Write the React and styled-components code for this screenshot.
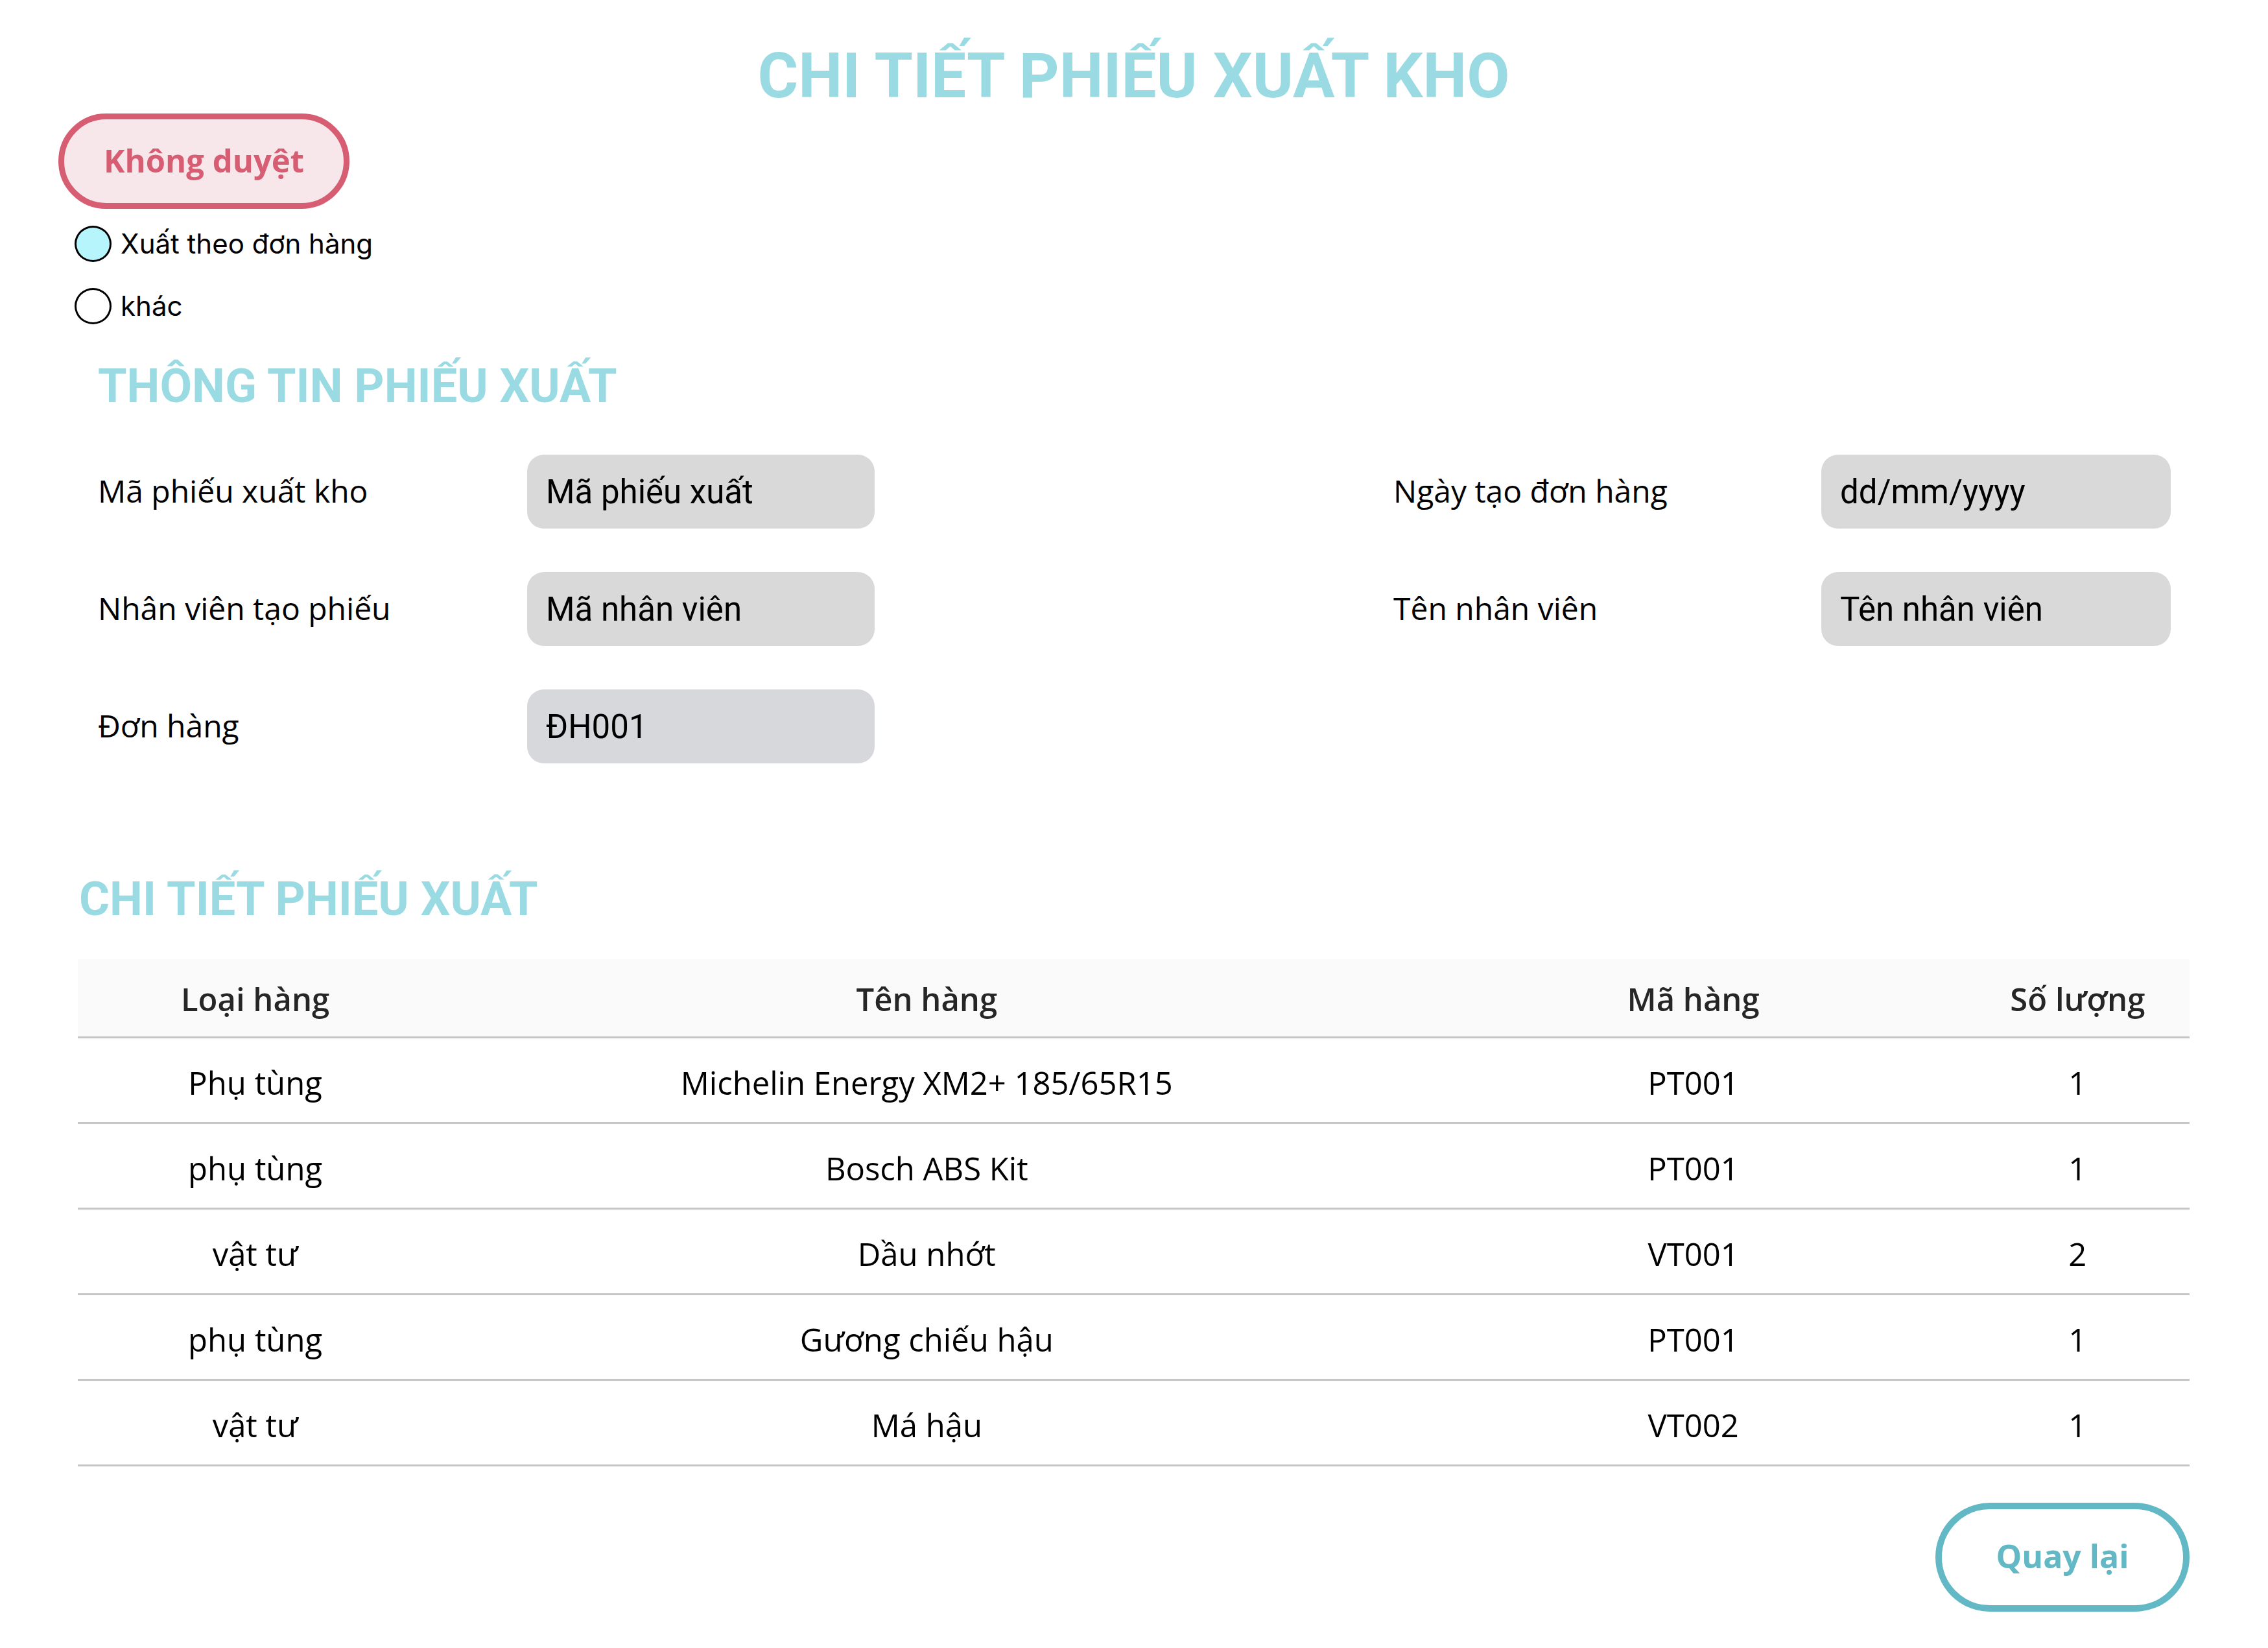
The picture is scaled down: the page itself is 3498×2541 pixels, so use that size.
import React from "react";
import styled, { createGlobalStyle } from "styled-components";

const GlobalStyle = createGlobalStyle`
  body {
    margin: 0;
    background: #ffffff;
  }
  * {
    box-sizing: border-box;
  }
`;

const formRows = [
  [
    { label: "Mã phiếu xuất kho", placeholder: "Mã phiếu xuất" },
    { label: "Ngày tạo đơn hàng", placeholder: "dd/mm/yyyy" },
  ],
  [
    { label: "Nhân viên tạo phiếu", placeholder: "Mã nhân viên" },
    { label: "Tên nhân viên", placeholder: "Tên nhân viên" },
  ],
  [{ label: "Đơn hàng", value: "ĐH001", tint: true }],
];

const items = [
  { type: "Phụ tùng", name: "Michelin Energy XM2+ 185/65R15", code: "PT001", qty: 1 },
  { type: "phụ tùng", name: "Bosch ABS Kit", code: "PT001", qty: 1 },
  { type: "vật tư", name: "Dầu nhớt", code: "VT001", qty: 2 },
  { type: "phụ tùng", name: "Gương chiếu hậu", code: "PT001", qty: 1 },
  { type: "vật tư", name: "Má hậu", code: "VT002", qty: 1 },
];

function App() {
  return (
    <Page>
      <GlobalStyle />
      <PageTitle>CHI TIẾT PHIẾU XUẤT KHO</PageTitle>

      <StatusButton type="button">Không duyệt</StatusButton>

      <RadioGroup>
        <RadioRow>
          <RadioDot checked />
          <span>Xuất theo đơn hàng</span>
        </RadioRow>
        <RadioRow>
          <RadioDot />
          <span>khác</span>
        </RadioRow>
      </RadioGroup>

      <SectionTitle indent>THÔNG TIN PHIẾU XUẤT</SectionTitle>

      <FormGrid>
        {formRows.map((row, i) => (
          <React.Fragment key={i}>
            {row.map((f, j) => (
              <React.Fragment key={j}>
                <FieldLabel>{f.label}</FieldLabel>
                <FieldInput
                  readOnly
                  tint={f.tint ? 1 : 0}
                  placeholder={f.placeholder}
                  defaultValue={f.value}
                />
                {j === 0 && <span />}
              </React.Fragment>
            ))}
          </React.Fragment>
        ))}
      </FormGrid>

      <SectionTitle>CHI TIẾT PHIẾU XUẤT</SectionTitle>

      <Table>
        <colgroup>
          <col style={{ width: "16.8%" }} />
          <col style={{ width: "46.8%" }} />
          <col style={{ width: "25.8%" }} />
          <col style={{ width: "10.6%" }} />
        </colgroup>
        <thead>
          <tr>
            <Th>Loại hàng</Th>
            <Th>Tên hàng</Th>
            <Th>Mã hàng</Th>
            <Th>Số lượng</Th>
          </tr>
        </thead>
        <tbody>
          {items.map((it, i) => (
            <tr key={i}>
              <Td>{it.type}</Td>
              <Td>{it.name}</Td>
              <Td>{it.code}</Td>
              <Td>{it.qty}</Td>
            </tr>
          ))}
        </tbody>
      </Table>

      <Footer>
        <BackButton type="button">Quay lại</BackButton>
      </Footer>
    </Page>
  );
}

export default App;

const Page = styled.div`
  width: 3498px;
  min-height: 2541px;
  padding: 60px 121px 60px 120px;
  display: flex;
  flex-direction: column;
  align-items: flex-start;
`;

const PageTitle = styled.h1`
  align-self: stretch;
  margin: 0;
  text-align: center;
  font-family: Roboto, "Liberation Sans", sans-serif;
  font-weight: 700;
  font-size: 96px;
  line-height: 115px;
  color: #9adbe3;
`;

const StatusButton = styled.button`
  margin-left: -30px;
  width: 449px;
  height: 147px;
  border: 9px solid #d75d73;
  border-radius: 80px;
  background: #f7e6ea;
  color: #d75d73;
  font-family: "Open Sans", sans-serif;
  font-weight: 700;
  font-size: 49px;
  padding: 0 0 4px;
`;

const RadioGroup = styled.div`
  margin-top: 25px;
  margin-left: -5px;
  display: flex;
  flex-direction: column;
  gap: 39px;
`;

const RadioRow = styled.label`
  display: flex;
  align-items: center;
  gap: 14px;
  font-family: Inter, Roboto, sans-serif;
  font-size: 42px;
  line-height: 57px;
  color: #000;
`;

const RadioDot = styled.span`
  width: 57px;
  height: 56px;
  border-radius: 50%;
  border: 3px solid #000;
  background: ${(p) => (p.checked ? "#b7f5fd" : "#ffffff")};
`;

const SectionTitle = styled.h2`
  margin: ${(p) => (p.indent ? "54px 0 0 31px" : "168px 0 0 2px")};
  font-family: Roboto, "Liberation Sans", sans-serif;
  font-weight: 700;
  font-size: 72px;
  line-height: 84px;
  color: #9adbe3;
`;

const FormGrid = styled.div`
  margin: 63px 0 0 31px;
  display: grid;
  grid-template-columns: 662px 536px 800px 660px 539px;
  grid-auto-rows: 114px;
  row-gap: 67px;
  align-items: center;
`;

const FieldLabel = styled.div`
  font-family: "Open Sans", sans-serif;
  font-size: 48px;
  color: #000;
  margin-top: -4px;
`;

const FieldInput = styled.input`
  height: 114px;
  width: 100%;
  border: none;
  outline: none;
  border-radius: 26px;
  padding: 0 29px;
  background: ${(p) => (p.tint ? "#d7d8db" : "#d9d9d9")};
  font-family: Roboto, sans-serif;
  font-size: 51px;
  color: #000;
  &::placeholder {
    color: #000;
    opacity: 1;
  }
`;

const Table = styled.table`
  margin-top: 50px;
  width: 100%;
  border-collapse: collapse;
  table-layout: fixed;
  font-family: "Open Sans", sans-serif;
`;

const Th = styled.th`
  height: 120px;
  background: #fafafa;
  border-bottom: 3px solid #c6c6c6;
  font-weight: 600;
  font-size: 49px;
  color: #262626;
  text-align: center;
  padding: 4px 0 0;
`;

const Td = styled.td`
  height: 132px;
  border-bottom: 3px solid #c6c6c6;
  font-size: 49px;
  color: #000;
  text-align: center;
  padding: 8px 0 0;
`;

const Footer = styled.div`
  align-self: stretch;
  display: flex;
  justify-content: flex-end;
  margin-top: 56px;
`;

const BackButton = styled.button`
  width: 392px;
  height: 168px;
  border: 10px solid #62b8c4;
  border-radius: 90px;
  background: #ffffff;
  color: #62b8c4;
  font-family: "Open Sans", sans-serif;
  font-weight: 700;
  font-size: 50px;
  padding: 0 0 4px;
`;
